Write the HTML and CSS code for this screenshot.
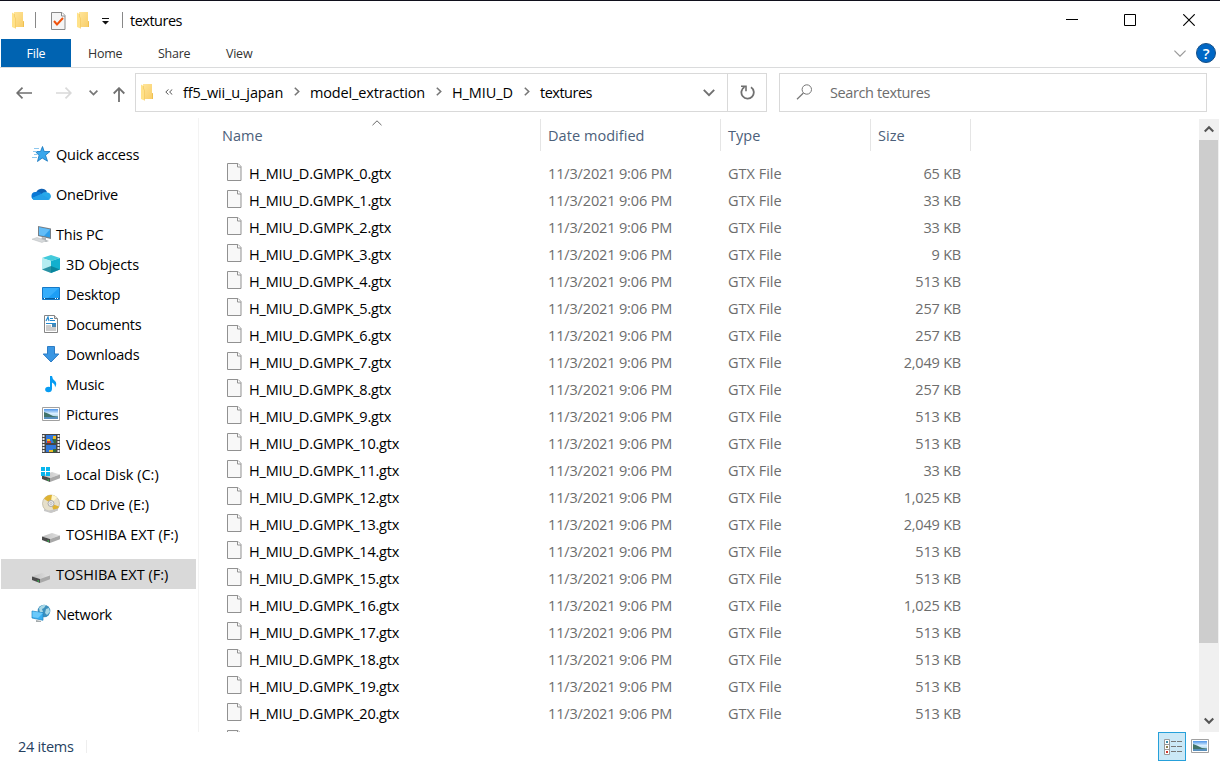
FILE: index.html
```html
<!DOCTYPE html>
<html lang="en">
<head>
    <meta charset="UTF-8">
    <meta name="viewport" content="width=device-width, initial-scale=1.0">
    <title>textures</title>
    <link rel="stylesheet" href="styles.css">
</head>
<body>
    <!-- Shared icons -->
    <svg class="defs" width="0" height="0">
        <defs>
            <linearGradient id="folderFill" x1="0" x2="1" y1="0" y2="1">
                <stop offset="0" stop-color="#ffe59a"/>
                <stop offset="1" stop-color="#f8cd68"/>
            </linearGradient>
            <linearGradient id="skyFill" x1="0" x2="0" y1="0" y2="1">
                <stop offset="0" stop-color="#4d94e8"/>
                <stop offset="0.45" stop-color="#d9efff"/>
                <stop offset="1" stop-color="#8fc3dc"/>
            </linearGradient>
            <linearGradient id="driveFill" x1="0" x2="1" y1="0" y2="0">
                <stop offset="0" stop-color="#bdbdbd"/>
                <stop offset="1" stop-color="#e2e2e2"/>
            </linearGradient>
            <symbol id="folder" viewBox="0 0 12 17">
                <path d="M2 0h9v9l1 .5V15H2z" fill="url(#folderFill)"/>
                <path d="M0 .5l2.500 1.500v3l1 1v10.500L0 15z" fill="#ffe28a"/>
                <path d="M2.500 2v3l1 1v10.500" fill="none" stroke="#f1c458" stroke-width=".6"/>
                <path d="M11 9l1 .5V15h-1z" fill="#efc050"/>
            </symbol>
            <symbol id="file" viewBox="0 0 15 18">
                <path d="M.5.5h10.500l3 3v14H.5z" fill="#f8f8f8" stroke="#919191"/>
                <path d="M10.500.5V4H14" fill="#fff" stroke="#919191"/>
            </symbol>
            <symbol id="picture" viewBox="0 0 18 14">
                <path d="M.5.5h17v13H.5z" fill="#fff" stroke="#a0a0a0"/>
                <path d="M2 2h14v10H2z" fill="url(#skyFill)"/>
                <path d="M2 5l4 1.500 5 2.500 5 .5v1H2z" fill="#41736a"/>
                <path d="M2 10h14v2H2z" fill="#578fbd"/>
            </symbol>
            <symbol id="drive" viewBox="0 0 18 10">
                <path d="M0 3.500L10 0l8 2.500L8 6z" fill="url(#driveFill)"/>
                <path d="M0 3.500L8 6v4L0 7z" fill="#4b4b4b"/>
                <path d="M8 6l10-3.500v3.700L8 10z" fill="#a8a8a8"/>
                <path d="M5.500 7l1.500.5V9l-1.500-.5z" fill="#35b04b"/>
            </symbol>
        </defs>
    </svg>

    <div class="window">
        <div class="titlebar">
            <svg class="folder title-folder" width="12" height="17"><use href="#folder"/></svg>
            <span class="bar bar-first"></span>
            <svg class="check-icon" width="15" height="18" viewBox="0 0 15 18">
                <path d="M.5.5h10.500l3 3v14H.5z" fill="#f5f5f5" stroke="#8a8a8a"/>
                <path d="M10.500.5V4H14" fill="#fff" stroke="#8a8a8a"/>
                <path d="M3 9l3 3.500 6-6.500" fill="none" stroke="#f0520c" stroke-width="2"/>
            </svg>
            <svg class="folder" width="12" height="17"><use href="#folder"/></svg>
            <svg class="customize" width="7" height="7" viewBox="0 0 7 7"><path d="M0 0h7v1H0zM0 3h7L3.500 6.500z" fill="#111"/></svg>
            <span class="bar bar-last"></span>
            <span class="title">textures</span>
            <div class="controls">
                <svg width="12" height="12" viewBox="0 0 12 12"><path d="M0 5.500h12" stroke="#000"/></svg>
                <svg width="12" height="12" viewBox="0 0 12 12"><path d="M.5.5h11v11H.5z" fill="none" stroke="#000"/></svg>
                <svg width="12" height="12" viewBox="0 0 12 12"><path d="M.3.3l11.400 11.400M11.700.3L.3 11.700" stroke="#000" stroke-width="1.150"/></svg>
            </div>
        </div>

        <div class="ribbon">
            <span class="tab file-tab">File</span>
            <span class="tab home-tab">Home</span>
            <span class="tab share-tab">Share</span>
            <span class="tab view-tab">View</span>
            <svg class="expand" width="12" height="7" viewBox="0 0 12 7"><path d="M.4.6L6 6.200 11.600.6" fill="none" stroke="#9a9a9a" stroke-width="1.200"/></svg>
            <span class="help">?</span>
        </div>

        <div class="navbar">
            <svg class="back" width="16" height="12" viewBox="0 0 16 12"><path d="M1 6h15M6.500.7L1.200 6l5.300 5.300" fill="none" stroke="#707070" stroke-width="1.700"/></svg>
            <svg class="forward" width="16" height="12" viewBox="0 0 16 12"><path d="M0 6h15M9.500.7L14.800 6l-5.300 5.300" fill="none" stroke="#d9d9d9" stroke-width="1.700"/></svg>
            <svg class="recent" width="9" height="6" viewBox="0 0 9 6"><path d="M.6.6l3.900 4L8.400.6" fill="none" stroke="#777" stroke-width="1.700"/></svg>
            <svg class="up" width="12" height="15" viewBox="0 0 12 15"><path d="M6 15V1M.7 6.500L6 1.200l5.300 5.300" fill="none" stroke="#707070" stroke-width="1.800"/></svg>
            <div class="address">
                <svg class="folder" width="12" height="17"><use href="#folder"/></svg>
                <svg class="double" width="8" height="6" viewBox="0 0 8 6"><path d="M3.500.4L.8 3l2.700 2.600M7.300.4L4.600 3l2.700 2.600" fill="none" stroke="#555"/></svg>
                <span class="crumb crumb-root">ff5_wii_u_japan</span>
                <svg class="sep" width="6" height="9" viewBox="0 0 6 9"><path d="M.8.7l3.900 3.800L.8 8.300" fill="none" stroke="#777" stroke-width="1.600"/></svg>
                <span class="crumb crumb-model">model_extraction</span>
                <svg class="sep" width="6" height="9" viewBox="0 0 6 9"><path d="M.8.7l3.900 3.800L.8 8.300" fill="none" stroke="#777" stroke-width="1.600"/></svg>
                <span class="crumb crumb-miu">H_MIU_D</span>
                <svg class="sep" width="6" height="9" viewBox="0 0 6 9"><path d="M.8.7l3.900 3.800L.8 8.300" fill="none" stroke="#777" stroke-width="1.600"/></svg>
                <span class="crumb crumb-last">textures</span>
                <svg class="drop" width="12" height="8" viewBox="0 0 12 8"><path d="M.8.9L6 6.200 11.200.9" fill="none" stroke="#707070" stroke-width="1.900"/></svg>
                <div class="refresh">
                    <svg width="15" height="15" viewBox="0 0 15 15">
                        <path d="M11 2.200A6.200 6.200 0 1 1 4.500 2" fill="none" stroke="#707070" stroke-width="1.800"/>
                        <path d="M1 1.200h5v5" fill="none" stroke="#707070" stroke-width="1.600"/>
                    </svg>
                </div>
            </div>
            <div class="search">
                <svg width="17" height="16" viewBox="0 0 17 16"><circle cx="10.800" cy="5.500" r="4.700" fill="none" stroke="#777"/><path d="M7.400 9L1 15.300" stroke="#777" stroke-width="1.200"/></svg>
                <span>Search textures</span>
            </div>
        </div>

        <div class="main">
            <div class="sidebar">
                <div class="item top">
                    <svg width="20" height="20" viewBox="0 0 20 20">
                        <path d="M11.500 2.500l1.700 5H19l-4.500 3.700 2 6-5.300-3.200L6.500 17.500l1.500-6-3.500-4h5z" fill="#3aa7ec" stroke="#1374bd" stroke-width=".8"/>
                        <path d="M3 4.500h5M2 7.500h4M3 10.500h3M1 13.500h5" stroke="#8dc7ee"/>
                    </svg>
                    <span>Quick access</span>
                </div>
                <div class="item top gap">
                    <svg width="20" height="20" viewBox="0 0 20 20">
                        <path d="M5 9a6 6 0 0 1 11-1l-5 5z" fill="#0f62b4"/>
                        <path d="M4 16a4 4 0 0 1 1-8q3-1 5 1l6 5-3 2z" fill="#0b79d5"/>
                        <path d="M10 10.500Q13 7 16.500 8.500A3.800 3.800 0 0 1 19.500 14Q18 16 16 16H4q-2 0-3-2z" fill="#28a8ea"/>
                        <path d="M10 10l9 5.200q-1 .8-3 .8H4q-2 0-3-1.700z" fill="#25a0e8"/>
                    </svg>
                    <span>OneDrive</span>
                </div>
                <div class="item top gap">
                    <svg width="20" height="20" viewBox="0 0 20 20">
                        <path d="M7 2l13 2.500V15L7 12z" fill="#777f86"/>
                        <path d="M8 3.200l11 2.200v8.200L8 11z" fill="#2f9eea"/>
                        <path d="M8 3.200l11 2.200-6 6.600-5-1z" fill="#64bdf7"/>
                        <path d="M11 13l4 1v2l3 1-3 1-5-2z" fill="#aeb3b7"/>
                        <path d="M1 15.200l5-1.700 9 3-4 2z" fill="#d6d9db" stroke="#b7babd" stroke-width=".5"/>
                    </svg>
                    <span>This PC</span>
                </div>
                <div class="item">
                    <svg width="20" height="20" viewBox="0 0 20 20">
                        <path d="M10 1l9 3-9 3-9-3z" fill="#43cadb"/>
                        <path d="M1 4l9 3v12l-9-3.500z" fill="#b5edf1"/>
                        <path d="M19 4l-9 3v12l9-3.500z" fill="#12afce"/>
                        <path d="M10 12l9 3.500-9 3.500-9-3.500z" fill="#087b91" opacity=".8"/>
                    </svg>
                    <span class="wide">3D Objects</span>
                </div>
                <div class="item">
                    <svg width="20" height="20" viewBox="0 0 20 20">
                        <path d="M1.500 3.500h17v12h-17z" fill="#1d9ef5" stroke="#1679c7"/>
                        <path d="M2 4h16L7 14H2z" fill="#36aefc"/>
                        <path d="M2 14h16v1H2z" fill="#075d9e"/>
                        <path d="M3 14.500h1M14 14.500h1M16 14.500h1" stroke="#fff"/>
                    </svg>
                    <span>Desktop</span>
                </div>
                <div class="item">
                    <svg width="20" height="20" viewBox="0 0 20 20">
                        <path d="M3.500 1.500h10l3 3v14h-13z" fill="#fff" stroke="#858585"/>
                        <path d="M13.500 1.500v3h3" fill="#ddd" stroke="#858585"/>
                        <path d="M5 7l2-4 1 4M9 4.500h3M9 6.500h5M5 9.500h10" fill="none" stroke="#258bd0" stroke-width="1.200"/>
                        <path d="M5 12h5M5 14h10M5 16h10" stroke="#999"/>
                        <path d="M11 10h4v3h-4z" fill="#4688b5"/>
                    </svg>
                    <span>Documents</span>
                </div>
                <div class="item">
                    <svg width="20" height="20" viewBox="0 0 20 20"><path d="M6.500 2.500h7V10h4.300L10 18 2.200 10h4.300z" fill="#3b97e3" stroke="#2d7cc5"/></svg>
                    <span>Downloads</span>
                </div>
                <div class="item">
                    <svg width="20" height="20" viewBox="0 0 20 20">
                        <ellipse cx="7.500" cy="15.500" rx="3.300" ry="2.700" fill="#079cf2"/>
                        <path d="M9 2h2q.2 3 3 5 2.500 2.500 0 6.500.3-3.500-3-5v7H9z" fill="#079cf2"/>
                    </svg>
                    <span>Music</span>
                </div>
                <div class="item">
                    <svg width="20" height="20" viewBox="0 0 20 20"><use href="#picture" x="1" y="3" width="18" height="14"/></svg>
                    <span>Pictures</span>
                </div>
                <div class="item">
                    <svg width="20" height="20" viewBox="0 0 20 20">
                        <path d="M1 0h18v19H1z" fill="#464646"/>
                        <path d="M2.500 1v18M17.500 1v18" stroke="#eee" stroke-width="2" stroke-dasharray="2 1"/>
                        <path d="M5 1h10v8H5zM5 11h10v7H5z" fill="#3178dc"/>
                        <path d="M6 5h3v3H6zM12 2h3v4h-3zM8 16h4v2H8z" fill="#eebd27"/>
                        <path d="M6 7h4v2H6z" fill="#d8402e"/>
                        <path d="M11 5h4v4h-2zM12 15h3v3h-3z" fill="#326e3b"/>
                    </svg>
                    <span class="wide">Videos</span>
                </div>
                <div class="item">
                    <svg width="20" height="20" viewBox="0 0 20 20">
                        <use href="#drive" x="1" y="8" width="18" height="10"/>
                        <path d="M0 3h4v4H0zM5 3h4v4H5zM0 8h4v4H0zM5 8h4v4H5z" fill="#08b6ee"/>
                    </svg>
                    <span class="drive-name">Local Disk (C:)</span>
                </div>
                <div class="item">
                    <svg width="20" height="20" viewBox="0 0 20 20">
                        <circle cx="10" cy="9.500" r="8.500" fill="#e6dfca" stroke="#b9b29b" stroke-width=".7"/>
                        <path d="M10 9.500L3 4.800A8.500 8.500 0 0 1 11 1zM10 9.500l8 3a8.500 8.500 0 0 1-5 5z" fill="#dfb333"/>
                        <path d="M10 9.500L11 1a8.500 8.500 0 0 1 5 2.500z" fill="#fff6cb"/>
                        <circle cx="10" cy="9.500" r="3" fill="#eee" stroke="#aaa"/>
                        <circle cx="10" cy="9.500" r="1" fill="#fff" stroke="#888" stroke-width=".5"/>
                        <path d="M3 15l5 1.500 9-2v2l-7 2.500-7-2z" fill="#c7c7c7"/>
                    </svg>
                    <span class="drive-name">CD Drive (E:)</span>
                </div>
                <div class="item">
                    <svg width="20" height="20" viewBox="0 0 20 20"><use href="#drive" x="1" y="9" width="18" height="10"/></svg>
                    <span class="drive-name">TOSHIBA EXT (F:)</span>
                </div>
                <div class="item top gap selected">
                    <svg width="20" height="20" viewBox="0 0 20 20"><use href="#drive" x="1" y="9" width="18" height="10"/></svg>
                    <span class="drive-name">TOSHIBA EXT (F:)</span>
                </div>
                <div class="item top gap">
                    <svg width="20" height="20" viewBox="0 0 20 20">
                        <circle cx="13" cy="7" r="6.300" fill="#3c8fbd"/>
                        <path d="M8 4q3-4 7-3l-2 3-2 1 1 3-3 1zM15 5l3-1 1 4-3 3-2-2z" fill="#a8d8e6"/>
                        <path d="M1 7l11 1.800v7.500L1 14z" fill="#38aff2" stroke="#1f83bd" stroke-width=".7"/>
                        <path d="M1.500 7.500L12 9l-5 5-5.500-1z" fill="#6bc9fa"/>
                        <path d="M5 16l5 1v1H5z" fill="#a5abad"/>
                    </svg>
                    <span>Network</span>
                </div>
            </div>

            <div class="content">
                <div class="columns">
                    <span class="col name-col">Name
                        <svg class="sort" width="10" height="6" viewBox="0 0 10 6"><path d="M.5 5.200L5 .8l4.500 4.400" fill="none" stroke="#666"/></svg>
                    </span>
                    <span class="col date-col">Date modified</span>
                    <span class="col type-col">Type</span>
                    <span class="col size-col">Size</span>
                </div>
                <div class="files" id="files"></div>
            </div>

            <div class="scrollbar">
                <svg class="scroll-arrow" width="10" height="8" viewBox="0 0 10 8"><path d="M.7 6.500L5 2.200l4.300 4.300" fill="none" stroke="#555" stroke-width="2.200"/></svg>
                <div class="thumb"></div>
                <svg class="scroll-arrow scroll-down" width="10" height="8" viewBox="0 0 10 8"><path d="M.7 1.500L5 5.800l4.300-4.300" fill="none" stroke="#555" stroke-width="2.200"/></svg>
            </div>
        </div>

        <div class="statusbar">
            <span class="count">24 items</span>
            <div class="view-button">
                <svg width="18" height="16" viewBox="0 0 18 16">
                    <path d="M.5.5h5v15h-5zM.5 5.500h5M.5 10.500h5" fill="#fff" stroke="#999"/>
                    <path d="M2 2h2v2H2z" fill="#3d8ca8"/>
                    <path d="M2 7h2v2H2z" fill="#8a8050"/>
                    <path d="M2 12h2v2H2z" fill="#d1372e"/>
                    <path d="M7 2.500h5M13 2.500h5M7 7.500h5M13 7.500h5M7 12.500h5M13 12.500h5" stroke="#777"/>
                </svg>
            </div>
            <svg class="large-view" width="18" height="14"><use href="#picture"/></svg>
        </div>
    </div>

    <script>
        // File sizes in KB, in order of file number
        var sizes = ["65", "33", "33", "9", "513", "257", "257", "2,049", "257", "513", "513", "33",
            "1,025", "2,049", "513", "513", "1,025", "513", "513", "513", "513"];
        var icon = '<svg class="file-icon" width="15" height="18"><use href="#file"/></svg>';
        var rows = "";

        for (var i = 0; i < sizes.length; i++) {
            rows += '<div class="row">' + icon +
                '<span class="file-name">H_MIU_D.GMPK_' + i + '.gtx</span>' +
                '<span class="date">11/3/2021 9:06 PM</span>' +
                '<span class="type">GTX File</span>' +
                '<span class="size">' + sizes[i] + ' KB</span>' +
                '</div>';
        }

        // Only the top of the next icon shows below the last full row
        rows += '<div class="row">' + icon + '</div>';

        document.getElementById('files').innerHTML = rows;
    </script>
</body>
</html>
```
FILE: styles.css
```css
* {
    box-sizing: border-box;
}
body {
    margin: 0;
    font-family: "Open Sans", "Noto Sans", sans-serif;
    font-size: 14.5px;
    letter-spacing: -0.25px;
    color: #000;
    background-color: #fff;
    overflow: hidden;
}
svg {
    display: block;
    flex: none;
}
span {
    white-space: nowrap;
}
.defs {
    position: absolute;
}
.window {
    display: flex;
    flex-direction: column;
    width: 1220px;
    height: 762px;
    border-top: 1px solid #10101c;
}

/* Title bar */
.titlebar {
    display: flex;
    align-items: center;
    height: 38px;
    padding-left: 12px;
}
.bar {
    width: 1px;
    height: 16px;
    background-color: #888;
}
.bar-first {
    margin: 0 15px 0 11px;
}
.check-icon {
    margin: 1px 11px 0 0;
}
.customize {
    margin: 3px 13px 0 13px;
}
.title {
    margin-left: 7px;
    letter-spacing: -0.5px;
}
.controls {
    display: flex;
    gap: 47px;
    margin-left: auto;
    margin-right: 25px;
}
.controls svg:first-child {
    margin-right: -1px;
}

/* Ribbon tabs */
.ribbon {
    display: flex;
    align-items: center;
    height: 29px;
    padding-left: 1px;
    border-bottom: 1px solid #dadbdc;
    font-size: 12.5px;
    color: #333;
}
.tab {
    height: 28px;
    line-height: 30px;
}
.file-tab {
    width: 70px;
    text-align: center;
    color: #fff;
    background-color: #0063b1;
}
.home-tab {
    width: 70px;
    padding-left: 17px;
}
.share-tab {
    width: 68px;
    padding-left: 17px;
}
.view-tab {
    padding-left: 17px;
}
.expand {
    margin-left: auto;
}
.help {
    width: 20px;
    height: 20px;
    margin: 0 4px 0 10px;
    border: 1px solid #164f86;
    border-radius: 50%;
    background-color: #0067c5;
    color: #fff;
    font-size: 15px;
    font-weight: 600;
    line-height: 18px;
    text-align: center;
}

/* Navigation and address bar */
.navbar {
    display: flex;
    align-items: center;
    height: 50px;
    padding: 0 13px 2px 16px;
}
.back,
.forward,
.recent {
    margin-top: 2px;
}
.forward {
    margin-left: 24px;
}
.recent {
    margin-left: 17px;
}
.up {
    margin: 4px 10px 0 15px;
}
.address {
    display: flex;
    align-items: center;
    width: 632px;
    height: 39px;
    padding-left: 5px;
    border: 1px solid #d9d9d9;
}
.double {
    margin: 0 10px 0 12px;
}
.crumb-root {
    width: 111px;
    letter-spacing: -0.12px;
}
.crumb-model {
    width: 126px;
    letter-spacing: -0.15px;
}
.crumb-miu {
    width: 72px;
    letter-spacing: -0.1px;
}
.crumb-last {
    letter-spacing: -0.5px;
}
.sep {
    margin: -2px 10px 0 0;
}
.drop {
    margin: 2px 12px 0 auto;
}
.refresh {
    display: flex;
    align-items: center;
    justify-content: center;
    width: 39px;
    height: 37px;
    border-left: 1px solid #d9d9d9;
}
.refresh svg {
    margin: 1px 0 0 1px;
}
.search {
    display: flex;
    align-items: center;
    gap: 17px;
    width: 428px;
    height: 39px;
    margin-left: 12px;
    padding-left: 16px;
    border: 1px solid #d9d9d9;
    letter-spacing: -0.38px;
    color: #6d6d6d;
}

/* Main area */
.main {
    display: flex;
    height: 614px;
}
.sidebar {
    width: 199px;
    padding: 21px 2px 0 1px;
    border-right: 1px solid #f3f3f3;
}
.item {
    display: flex;
    align-items: center;
    gap: 5px;
    height: 30px;
    padding-left: 40px;
}
.top {
    padding-left: 30px;
}
.gap {
    margin-top: 10px;
}
.selected {
    background-color: #d9d9d9;
}
.wide {
    letter-spacing: -0.05px;
}
.drive-name {
    letter-spacing: 0;
}
.content {
    flex: 1;
    overflow: hidden;
}
.columns {
    display: flex;
    height: 33px;
    margin-top: 1px;
    letter-spacing: 0.05px;
    color: #4c607a;
}
.col {
    height: 32px;
    padding-left: 7px;
    border-right: 1px solid #e5e5e5;
    line-height: 33px;
}
.name-col {
    position: relative;
    width: 342px;
    padding-left: 23px;
}
.sort {
    position: absolute;
    top: 1px;
    left: 173px;
}
.date-col {
    width: 180px;
}
.type-col {
    width: 150px;
}
.size-col {
    width: 100px;
}
.files {
    padding-top: 8px;
}
.row {
    display: flex;
    align-items: center;
    height: 27px;
    color: #6d6d6d;
}
.file-icon {
    margin: 0 7px 3px 28px;
}
.file-name {
    width: 299px;
    letter-spacing: -0.2px;
    color: #000;
}
.date {
    width: 180px;
    letter-spacing: -0.15px;
}
.type {
    width: 143px;
    letter-spacing: 0;
}
.size {
    width: 90px;
    letter-spacing: -0.2px;
    text-align: right;
}

/* Scrollbar */
.scrollbar {
    width: 20px;
    margin: 1px 1px 0 0;
    padding-top: 6px;
    background-color: #f0f0f0;
}
.scroll-arrow {
    margin: 0 auto 7px;
}
.thumb {
    width: 19px;
    height: 503px;
    background-color: #cdcdcd;
}
.scroll-down {
    margin: 74px auto 0;
}

/* Status bar */
.statusbar {
    display: flex;
    height: 30px;
    color: #26415f;
}
.count {
    height: 13px;
    width: 87px;
    margin-top: 8px;
    padding-left: 18px;
    border-right: 1px solid #eee;
    line-height: 14px;
}
.view-button {
    display: flex;
    align-items: center;
    justify-content: center;
    width: 28px;
    height: 29px;
    margin-left: auto;
    border: 1px solid #26a0da;
    background-color: #cbe8f6;
}
.view-button svg {
    margin-left: 2px;
}
.large-view {
    margin: 7px 11px 0 5px;
}
```
